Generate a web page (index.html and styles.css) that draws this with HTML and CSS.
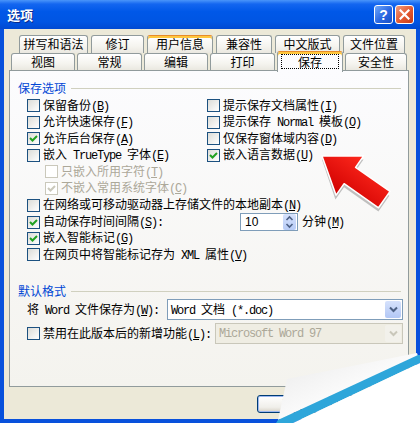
FILE: index.html
```html
<!DOCTYPE html>
<html>
<head>
  <meta charset="utf-8">
  <title>选项</title>
  <link rel="stylesheet" href="styles.css">
</head>
<body>
<div class="window">
  <div class="titlebar">
    <span class="title">选项</span>
    <span class="tbtn help">?</span>
    <span class="tbtn close">
      <svg width="11" height="11" viewBox="0 0 11 11"><path d="M1.5 1.5 L9.5 9.5 M9.5 1.5 L1.5 9.5" stroke="#fff" stroke-width="2.2" stroke-linecap="square"/></svg>
    </span>
  </div>

  <div class="client">
    <div class="tabrow back">
      <div class="tab w69">拼写和语法</div>
      <div class="tab w53">修订</div>
      <div class="tab w66 hot">用户信息</div>
      <div class="tab w56">兼容性</div>
      <div class="tab w65">中文版式</div>
      <div class="tab w62">文件位置</div>
    </div>
    <div class="tabrow front">
      <div class="tab w64">视图</div>
      <div class="tab w65">常规</div>
      <div class="tab w64">编辑</div>
      <div class="tab w65">打印</div>
      <div class="tab w66 sel"><span class="focus">保存</span></div>
      <div class="tab w62">安全性</div>
    </div>

    <div class="panel">
      <div class="ghead">保存选项</div>

      <div class="row h17">
        <span class="cb col"><span class="box"></span><span>保留备份<span class="m">(<u>B</u>)</span></span></span>
        <span class="cb"><span class="box"></span><span>提示保存文档属性<span class="m">(<u>I</u>)</span></span></span>
      </div>
      <div class="row h16">
        <span class="cb col"><span class="box"></span><span>允许快速保存<span class="m">(<u>F</u>)</span></span></span>
        <span class="cb"><span class="box"></span><span>提示保存<span class="m"> Normal </span>模板<span class="m">(<u>O</u>)</span></span></span>
      </div>
      <div class="row h17">
        <span class="cb col"><span class="box"><svg width="11" height="11" viewBox="0 0 11 11"><path d="M2 5 L4.5 7.5 L9 3" fill="none" stroke="#21A121" stroke-width="2"/></svg></span><span>允许后台保存<span class="m">(<u>A</u>)</span></span></span>
        <span class="cb"><span class="box"></span><span>仅保存窗体域内容<span class="m">(<u>D</u>)</span></span></span>
      </div>
      <div class="row h16">
        <span class="cb col"><span class="box"></span><span>嵌入<span class="m"> TrueType </span>字体<span class="m">(<u>E</u>)</span></span></span>
        <span class="cb"><span class="box"><svg width="11" height="11" viewBox="0 0 11 11"><path d="M2 5 L4.5 7.5 L9 3" fill="none" stroke="#21A121" stroke-width="2"/></svg></span><span>嵌入语言数据<span class="m">(<u>U</u>)</span></span></span>
      </div>
      <div class="row h17 sub">
        <span class="cb off"><span class="box"></span><span>只嵌入所用字符<span class="m">(<u>T</u>)</span></span></span>
      </div>
      <div class="row h16 sub">
        <span class="cb off"><span class="box"><svg width="11" height="11" viewBox="0 0 11 11"><path d="M2 5 L4.5 7.5 L9 3" fill="none" stroke="#CAC8BB" stroke-width="2"/></svg></span><span>不嵌入常用系统字体<span class="m">(<u>C</u>)</span></span></span>
      </div>
      <div class="row h18">
        <span class="cb"><span class="box"></span><span>在网络或可移动驱动器上存储文件的本地副本<span class="m">(<u>N</u>)</span></span></span>
      </div>
      <div class="row h16">
        <span class="cb wide"><span class="box"><svg width="11" height="11" viewBox="0 0 11 11"><path d="M2 5 L4.5 7.5 L9 3" fill="none" stroke="#21A121" stroke-width="2"/></svg></span><span>自动保存时间间隔<span class="m">(<u>S</u>):</span></span></span>
        <span class="spin">
          <span class="val">10</span>
          <span class="arrows">
            <svg width="13" height="16" viewBox="0 0 13 16"><path d="M3.5 6 L6.5 3 L9.5 6 M3.5 10 L6.5 13 L9.5 10" fill="none" stroke="#4D6185" stroke-width="1.6"/></svg>
          </span>
        </span>
        <span class="unit">分钟<span class="m">(<u>M</u>)</span></span>
      </div>
      <div class="row h16">
        <span class="cb"><span class="box"><svg width="11" height="11" viewBox="0 0 11 11"><path d="M2 5 L4.5 7.5 L9 3" fill="none" stroke="#21A121" stroke-width="2"/></svg></span><span>嵌入智能标记<span class="m">(<u>G</u>)</span></span></span>
      </div>
      <div class="row h17">
        <span class="cb"><span class="box"></span><span>在网页中将智能标记存为<span class="m"> XML </span>属性<span class="m">(<u>V</u>)</span></span></span>
      </div>

      <div class="ghead second">默认格式</div>

      <div class="row h21 first">
        <span class="lbl">将<span class="m"> Word </span>文件保存为<span class="m">(<u>W</u>):</span></span>
        <span class="combo w236">
          <span class="txt m">Word <span class="cjk">文档</span> (*.doc)</span>
          <span class="drop"><svg width="9" height="7" viewBox="0 0 9 7"><path d="M1 1.5 L4.5 5 L8 1.5" fill="none" stroke="#4D6185" stroke-width="2"/></svg></span>
        </span>
      </div>
      <div class="row h21 last">
        <span class="cb lab"><span class="box"></span><span>禁用在此版本后的新增功能<span class="m">(<u>L</u>):</span></span></span>
        <span class="combo w188 disabled">
          <span class="txt m">Microsoft Word 97</span>
          <span class="drop"><svg width="9" height="7" viewBox="0 0 9 7"><path d="M1 1.5 L4.5 5 L8 1.5" fill="none" stroke="#C9C7BA" stroke-width="2"/></svg></span>
        </span>
      </div>
    </div>

    <div class="buttons">
      <span class="btn def">确定</span>
      <span class="btn">取消</span>
    </div>
  </div>

  <svg class="overlay" width="420" height="423" viewBox="0 0 420 423">
    <defs>
      <linearGradient id="flap" x1="0" y1="0" x2="1" y2="1">
        <stop offset="0" stop-color="#E9E9E9"/>
        <stop offset="0.5" stop-color="#FAFAFA"/>
        <stop offset="1" stop-color="#FFFFFF"/>
      </linearGradient>
      <linearGradient id="red" x1="0" y1="0" x2="0" y2="1">
        <stop offset="0" stop-color="#FF2A1E"/>
        <stop offset="1" stop-color="#D00000"/>
      </linearGradient>
    </defs>
    <g transform="translate(322,156) rotate(35)">
      <polygon points="2,3 36,-21 36,-6 78,-6 78,13 36,13 36,28" fill="#7A7A7A" opacity="0.45"/>
      <polygon points="0,0 34,-24 34,-10 76,-10 76,10 34,10 34,24" fill="url(#red)" stroke="#FFFFFF" stroke-width="1.5" stroke-linejoin="round"/>
    </g>
    <polygon points="287,379 417,353 418,356 278,420" fill="url(#flap)"/>
    <polygon points="278,420 418,355 420,355 420,363 293,423 276,423" fill="#2EA6DA"/>
    <polygon points="293,423 420,363 420,423" fill="#FFFFFF"/>
  </svg>
</div>
</body>
</html>
```

FILE: styles.css
```css
html, body {
  margin: 0;
  padding: 0;
  background: #fff;
}
body {
  font-family: "Noto Sans CJK SC", "Liberation Sans", sans-serif;
  font-size: 12px;
  color: #000;
}
u {
  text-decoration: underline;
}
.m {
  font-family: "Liberation Mono", monospace;
  font-size: 12px;
  letter-spacing: -1.2px;
  white-space: pre;
}
.cjk {
  font-family: "Noto Sans CJK SC", sans-serif;
  font-size: 12px;
  letter-spacing: 0;
}

/* window frame */
.window {
  position: relative;
  width: 420px;
  height: 423px;
  background: #0851DC;
  display: flex;
  flex-direction: column;
  overflow: hidden;
}
.titlebar {
  height: 29px;
  flex: none;
  display: flex;
  align-items: center;
  padding: 0 6px 0 7px;
  background: linear-gradient(#4A95FA, #1466F0 14%, #0058E8 40%, #0055E3 75%, #0049D2);
}
.title {
  flex: 1;
  color: #fff;
  font-weight: bold;
  font-size: 13px;
  text-shadow: 1px 1px #0B2A8A;
}
.tbtn {
  width: 19px;
  height: 19px;
  box-sizing: border-box;
  border: 1px solid #fff;
  border-radius: 3px;
  display: flex;
  align-items: center;
  justify-content: center;
  margin-left: 2px;
}
.help {
  background: linear-gradient(135deg, #6FA8FB, #2A67E2 55%, #1B4FC5);
  color: #fff;
  font: bold 14px "Liberation Sans", sans-serif;
}
.close {
  background: linear-gradient(135deg, #F39D7E, #E2582F 55%, #C53A17);
}

.client {
  flex: 1;
  margin: 0 4px 4px;
  background: #ECE9D8;
  padding-top: 6px;
}

/* tabs */
.tabrow {
  display: flex;
}
.tabrow.back {
  height: 18px;
  gap: 3px;
  margin-left: 15px;
}
.tabrow.front {
  height: 17px;
  gap: 2px;
  margin-left: 7px;
}
.tab {
  flex: none;
  box-sizing: border-box;
  height: 100%;
  border: 1px solid #919B9C;
  border-bottom: none;
  border-radius: 3px 3px 0 0;
  background: linear-gradient(#FFFFFF, #F5F4EF 60%, #EAE8E0);
  text-align: center;
  line-height: 15px;
  overflow: hidden;
}
.tabrow.back .tab {
  line-height: 16px;
}
.tab.hot {
  border-top-color: #E68B2C;
  box-shadow: inset 0 2px #FFC73C;
}
.tab.sel {
  position: relative;
  z-index: 2;
  height: 21px;
  margin-top: -2px;
  padding: 2px 3px 0;
  border-top-color: #E68B2C;
  box-shadow: inset 0 2px #FFC73C;
  background: #FCFCFE;
}
.tab.sel .focus {
  display: block;
  height: 15px;
  line-height: 13px;
  border: 1px dotted #000;
  box-sizing: border-box;
}
.w53 { width: 53px; }
.w56 { width: 56px; }
.w62 { width: 62px; }
.w64 { width: 64px; }
.w65 { width: 65px; }
.w66 { width: 66px; }
.w69 { width: 69px; }

/* tab page */
.panel {
  position: relative;
  box-sizing: border-box;
  margin-left: 5px;
  width: 400px;
  height: 317px;
  border: 1px solid #919B9C;
  background: linear-gradient(#FCFCFE, #F4F3EE);
  padding: 10px 7px 0 8px;
}
.ghead {
  display: flex;
  align-items: center;
  gap: 5px;
  height: 14px;
  line-height: 14px;
  margin-bottom: 2px;
  color: #0046D5;
}
.ghead::after {
  content: "";
  flex: 1;
  height: 1px;
  background: #D0D0BF;
}
.ghead.second {
  margin-top: 21px;
  margin-bottom: 1px;
}
.row {
  display: flex;
  align-items: center;
  padding-left: 9px;
  white-space: nowrap;
  line-height: 14px;
}
.row.sub {
  padding-left: 27px;
}
.row.last {
  margin-top: 3px;
}
.h15 { height: 15px; }
.h16 { height: 16px; }
.h17 { height: 17px; }
.h18 { height: 18px; }
.h21 { height: 21px; }

.cb {
  display: flex;
  align-items: center;
  flex: none;
}
.cb.col {
  width: 180px;
}
.cb.wide {
  width: 213px;
}
.cb.lab {
  width: 188px;
}
.cb.off {
  color: #ACA899;
}
.box {
  flex: none;
  width: 13px;
  height: 13px;
  box-sizing: border-box;
  border: 1px solid #1C5180;
  background: linear-gradient(135deg, #DCDCD7, #FFFFFF);
  margin-right: 3px;
  display: flex;
}
.cb.off .box {
  border-color: #CAC8BB;
  background: #fff;
}

/* spinner */
.spin {
  flex: none;
  display: flex;
  align-items: center;
  width: 58px;
  height: 18px;
  box-sizing: border-box;
  border: 1px solid #7F9DB9;
  background: #fff;
}
.spin .val {
  flex: 1;
  padding-left: 4px;
  font-family: "Liberation Sans", sans-serif;
  font-size: 12px;
}
.spin .arrows {
  width: 13px;
  height: 16px;
  margin-right: 1px;
  border-radius: 2px;
  background: linear-gradient(#D6E2FC, #B7CBF6);
  display: flex;
}
.unit {
  margin-left: 4px;
}

/* combos */
.lbl {
  flex: none;
  width: 140px;
}
.combo {
  flex: none;
  display: flex;
  align-items: center;
  height: 21px;
  box-sizing: border-box;
  border: 1px solid #7F9DB9;
  background: #fff;
}
.w236 { width: 236px; }
.w188 { width: 188px; }
.combo .txt {
  flex: 1;
  padding-left: 3px;
}
.combo .drop {
  width: 16px;
  height: 17px;
  margin-right: 1px;
  border-radius: 2px;
  background: linear-gradient(#D6E2FC, #B2C7F5);
  display: flex;
  align-items: center;
  justify-content: center;
}
.combo.disabled {
  border-color: #C9C7BA;
  background: #EFEDE3;
  color: #ACA899;
}
.combo.disabled .drop {
  background: #F2F1EB;
}

/* buttons */
.buttons {
  display: flex;
  gap: 5px;
  margin: 8px 0 0 253px;
}
.btn {
  width: 75px;
  height: 18px;
  box-sizing: border-box;
  border: 1px solid #003C74;
  border-radius: 3px;
  background: linear-gradient(#FFFFFF, #F0EFEA 70%, #D8D2C6);
  text-align: center;
  line-height: 16px;
}
.btn.def {
  box-shadow: inset 0 0 0 1px #9CB7F0;
}

.overlay {
  position: absolute;
  left: 0;
  top: 0;
  pointer-events: none;
}
```
